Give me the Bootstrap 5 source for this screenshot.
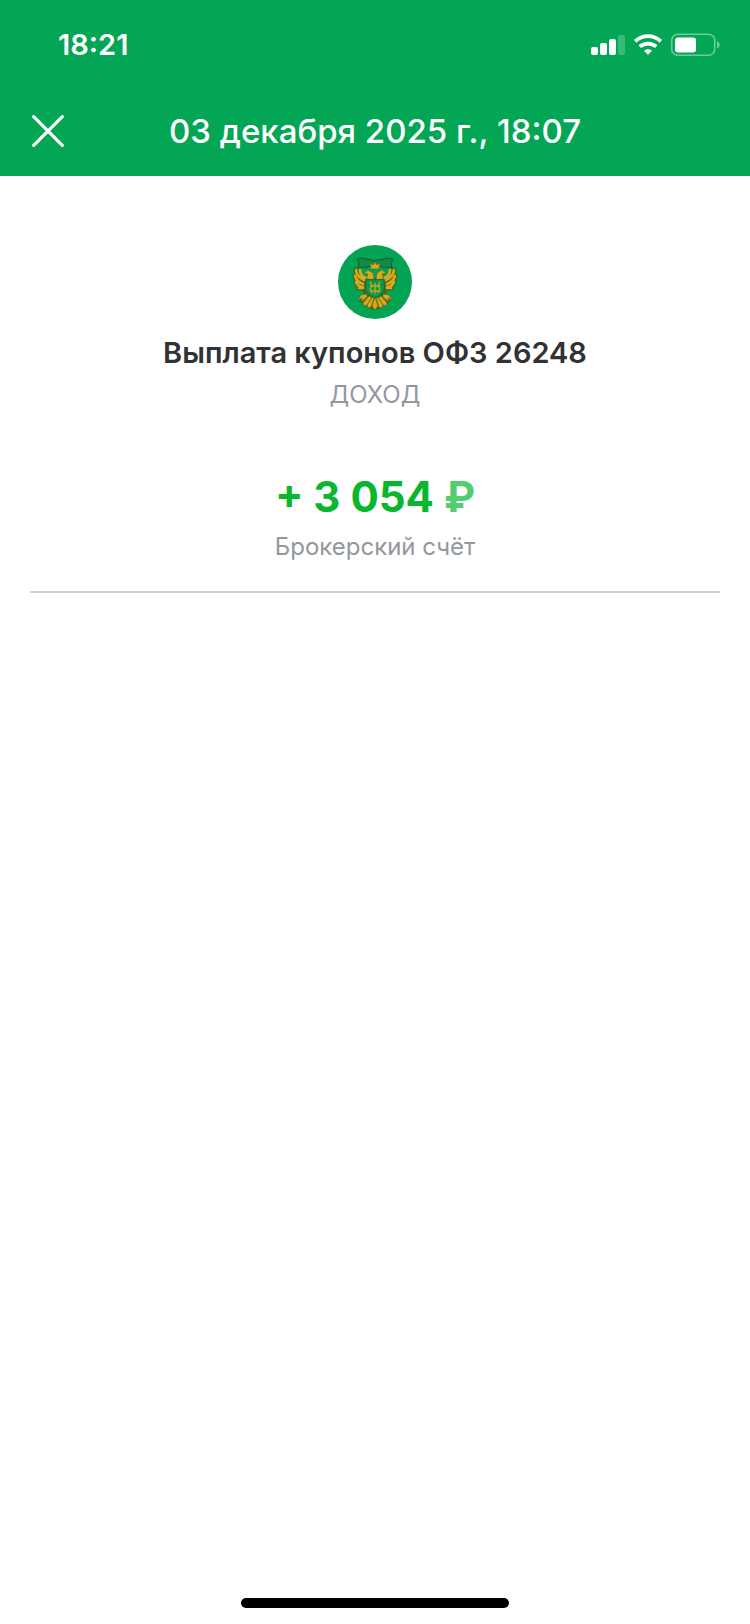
<!DOCTYPE html>
<html lang="ru">
<head>
<meta charset="utf-8">
<meta name="viewport" content="width=device-width, initial-scale=1">
<title>Выплата купонов</title>
<link rel="stylesheet" href="https://cdn.jsdelivr.net/npm/bootstrap@5.3.0/dist/css/bootstrap.min.css">
<style>
  body { font-family: Inter, "Liberation Sans", sans-serif; background: #fff; color: #303234; }
  .app-header { background: #03a655; color: #fff; }
  .status-bar { height: 88px; padding: 2px 29px 0 58px; }
  .status-time { font-size: 29px; line-height: 32px; font-weight: 600; }
  .title-bar { display: grid; grid-template-columns: 32px 1fr 32px; height: 88px; padding: 0 32px 2px; }
  .title-bar h1 { font-size: 33px; line-height: 40px; font-weight: 500; }
  .close-btn { line-height: 0; }
  .details { margin: 0 30px; padding: 69px 0 28px; border-bottom: 2px solid #d1d1d3; }
  .op-name { font-size: 29px; line-height: 36px; font-weight: 600; margin-top: 16px; }
  .op-kind { font-size: 24px; line-height: 32px; margin-top: 8px; }
  .amount { font-size: 42px; line-height: 52px; font-weight: 700; color: #09b72f; margin-top: 60px; }
  .currency { color: #54cd70; }
  .account { font-size: 24px; line-height: 32px; margin-top: 8px; }
  .muted-text { color: #94979d; }
  .home-bar { width: 268px; height: 10px; background: #000; margin-bottom: 16px; }
</style>
</head>
<body class="d-flex flex-column min-vh-100">
<header class="app-header">
  <div class="status-bar d-flex align-items-center justify-content-between">
    <time class="status-time">18:21</time>
    <svg width="130" height="24" viewBox="0 0 130 24" fill="#fff" role="img" aria-label="Сеть, Wi-Fi, батарея">
      <rect x="0" y="14" width="7" height="8" rx="2"/>
      <rect x="9" y="10" width="7" height="12" rx="2"/>
      <rect x="18" y="6" width="7" height="16" rx="2"/>
      <rect x="27" y="2" width="7" height="20" rx="2" opacity=".22"/>
      <path d="M57 21.500l-3.700-3.800q3.700-2.600 7.400 0z" stroke="#fff" stroke-width=".6" stroke-linejoin="round"/>
      <g fill="none" stroke="#fff" stroke-width="3.800">
        <path d="M44.200 8.300c7.200-6.800 18.400-6.800 25.600 0"/>
        <path d="M48.800 13.700c4.600-4.200 11.800-4.200 16.400 0"/>
      </g>
      <rect x="80.700" y="1.200" width="43" height="21" rx="6" fill="none" stroke="#fff" stroke-width="1.600" opacity=".42"/>
      <rect x="84" y="4.500" width="21" height="15" rx="3"/>
      <path d="M126 8.200q2.800 1 2.800 3.600t-2.800 3.600z" opacity=".45"/>
    </svg>
  </div>
  <div class="title-bar align-items-center">
    <button type="button" class="close-btn btn p-0 border-0" aria-label="Закрыть">
      <svg width="32" height="32" viewBox="0 0 32 32" fill="none" stroke="#fff" stroke-width="3.200" stroke-linecap="round"><path d="M1.700 1.700l28.600 28.600M30.300 1.700L1.700 30.300"/></svg>
    </button>
    <h1 class="m-0 text-center text-nowrap">03 декабря 2025 г., 18:07</h1>
  </div>
</header>
<main class="flex-grow-1">
  <section class="details text-center">
    <svg class="d-block mx-auto" width="74" height="74" viewBox="0 0 74 74" role="img" aria-label="Герб">
      <circle cx="37" cy="37" r="37" fill="#03a354"/>
      <path d="M19 14q5-2 9 0q9 3 18 0q4-2 9 0l-2 4 1 5q-4-2-7 0q-10-5-20 0q-3-2-7 0l1-5z" fill="#118a48" stroke="#145b32"/>
      <path d="M26 33q-3 12 0 17l-5 6 9 7 7 2 7-2 9-7-5-6q3-5 0-17z" fill="#3d6b24"/>
      <g fill="none" stroke="#42631f" stroke-width="5" stroke-linecap="round">
        <path d="M18 25q1 7 8 10M17 31q2 6 8 8M18 37q2 5 7 5M21 43h4M56 25q-1 7-8 10M57 31q-2 6-8 8M56 37q-2 5-7 5M53 43h-4"/>
      </g>
      <g fill="none" stroke="#d9aa18" stroke-width="2.700" stroke-linecap="round">
        <path d="M18 25q1 7 8 10M22 25q0 6 6 8M17 31q2 6 8 8M18 37q2 5 7 5M21 43h4"/>
        <path d="M56 25q-1 7-8 10M52 25q0 6-6 8M57 31q-2 6-8 8M56 37q-2 5-7 5M53 43h-4"/>
      </g>
      <g fill="#d9aa18" stroke="#5c681c" stroke-width=".6">
        <path d="M32 18l3 2 2-3 2 3 3-2-1 6h-8z"/>
        <path d="M36 34l-1-6-5-3-4 3 4 1-2 5 4 2zM38 34l1-6 5-3 4 3-4 1 2 5-4 2z"/>
        <path d="M29 49l-6 1-3 5 4-2-1 4 6-5zM45 49l6 1 3 5-4-2 1 4-6-5z"/>
        <path d="M37 52l-3 9 3 4 3-4zM34 52l-5 8 1 3 3-1 3-9zM40 52l5 8-1 3-3-1-3-9zM31 51l-6 7 1 3 3-1 5-7zM43 51l6 7-1 3-3-1-5-7z"/>
      </g>
      <path d="M28 34q9 2 18 0v13q-4 4-9 6q-5-2-9-6z" fill="#0c9a4a" stroke="#28682d"/>
      <g fill="none" stroke="#c5a620" stroke-width="1.300">
        <path d="M37 38v11M32 37l2 4-2 3 2 4M42 37l-2 4 2 3-2 4M32 41h10M32 46h10"/>
      </g>
    </svg>
    <h2 class="op-name mb-0">Выплата купонов ОФЗ 26248</h2>
    <p class="op-kind muted-text mb-0">ДОХОД</p>
    <p class="amount mb-0">+ 3 054 <span class="currency">₽</span></p>
    <p class="account muted-text mb-0">Брокерский счёт</p>
  </section>
</main>
<footer><div class="home-bar rounded-pill mx-auto"></div></footer>
<script src="https://cdn.jsdelivr.net/npm/bootstrap@5.3.0/dist/js/bootstrap.bundle.min.js"></script>
</body>
</html>
